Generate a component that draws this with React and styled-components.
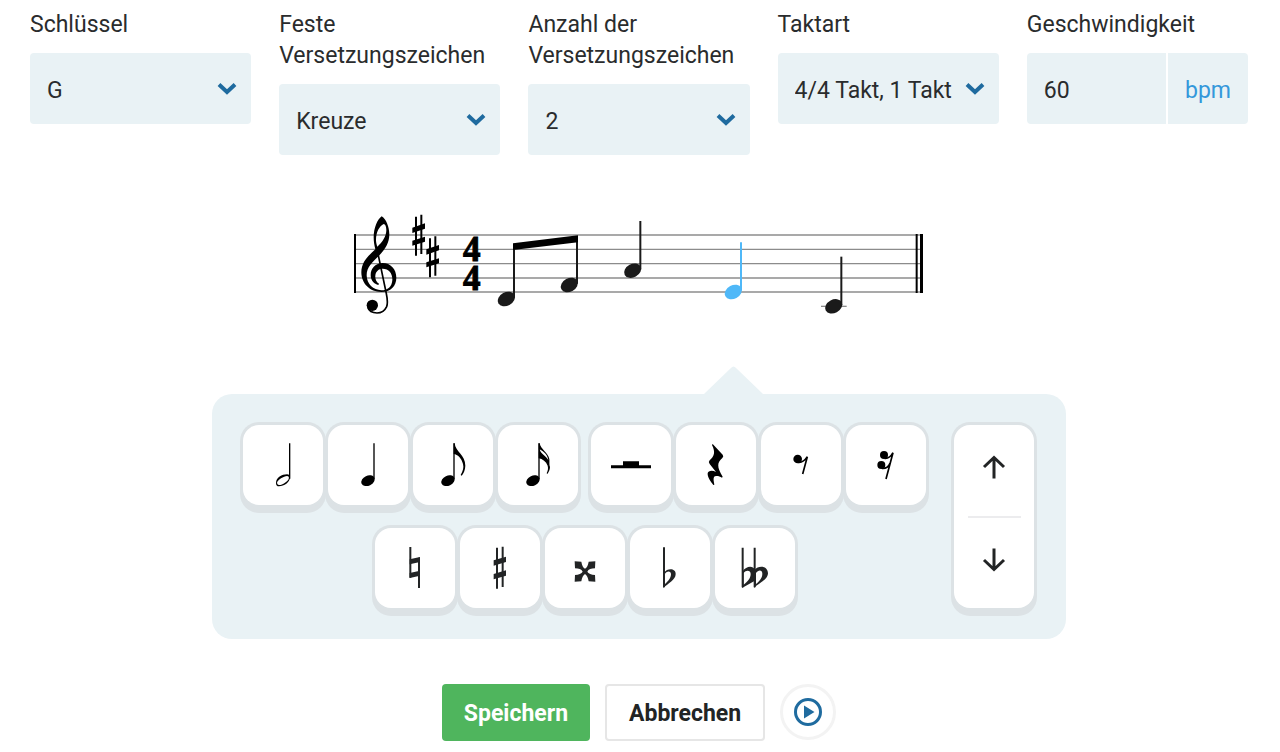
import React from "react"
import styled, { createGlobalStyle } from "styled-components"

const colors = {
  text: "#2a2c2d",
  panel: "#e9f2f5",
  keyEdge: "#dce2e5",
  chevron: "#1f6b9f",
  unit: "#3498db",
  green: "#4fb55d",
  selected: "#4fb8f8",
}

const GlobalStyle = createGlobalStyle`
  * {
    box-sizing: border-box;
  }

  body {
    margin: 0;
    background: #fff;
    color: ${colors.text};
    font-family: Roboto, "Liberation Sans", sans-serif;
    font-size: 23px;
    line-height: 31px;
  }

  button, input, select {
    font: inherit;
    color: inherit;
  }
`

const Page = styled.main`
  display: flex;
  flex-direction: column;
  align-items: center;
  padding: 9px 32px 11px 30px;
`

const Fields = styled.form`
  display: grid;
  grid-template-columns: repeat(5, minmax(0, 1fr));
  align-items: start;
  gap: 28px;
  width: 100%;
`

const Field = styled.div`
  display: flex;
  flex-direction: column;
  gap: 13px;
`

const SelectBox = styled.div`
  position: relative;

  & > svg {
    position: absolute;
    right: 14px;
    top: 29px;
    pointer-events: none;
  }
`

const Select = styled.select`
  appearance: none;
  display: block;
  width: 100%;
  height: 71px;
  padding: 3px 44px 0 17px;
  border: 0;
  border-radius: 4px;
  background: ${colors.panel};
`

const Tempo = styled.div`
  display: flex;
  gap: 2px;
  height: 71px;
  border-radius: 4px;
  overflow: hidden;
`

const TempoInput = styled.input`
  flex: 1;
  min-width: 0;
  padding: 3px 17px 0;
  border: 0;
  background: ${colors.panel};
`

const Unit = styled.span`
  display: flex;
  align-items: center;
  justify-content: center;
  width: 80px;
  padding-top: 3px;
  background: ${colors.panel};
  color: ${colors.unit};
`

const Score = styled.svg`
  display: block;
  width: 598px;
  max-width: 100%;
  margin: 45px 0 64px;
`

const Panel = styled.section`
  position: relative;
  display: flex;
  gap: 28px;
  width: 854px;
  max-width: 100%;
  padding: 31px 32px 31px 31px;
  border-radius: 20px;
  background: ${colors.panel};
`

const Pointer = styled.svg`
  position: absolute;
  left: 492px;
  bottom: 100%;
`

const Keys = styled.div`
  flex: 1;
  display: flex;
  flex-direction: column;
  gap: 23px;
`

const KeyRow = styled.div`
  display: flex;
  justify-content: center;
  gap: 13px;
`

const KeyGroup = styled.div`
  display: flex;
  gap: 5px;
`

const keySurface = `
  border-radius: 16px;
  background: #fff;
  box-shadow: 0 0 0 3px ${colors.keyEdge}, 0 5px 0 3px ${colors.keyEdge};
`

const Key = styled.button`
  width: 80px;
  height: 80px;
  padding: 0;
  border: 0;
  ${keySurface}

  & > svg {
    display: block;
  }
`

const Pitch = styled.div`
  display: flex;
  flex-direction: column;
  width: 80px;
  ${keySurface}
`

const PitchButton = styled.button`
  flex: 1;
  display: flex;
  align-items: center;
  justify-content: center;
  padding: 0 0 6px;
  border: 0;
  background: none;
`

const Divider = styled.hr`
  width: 53px;
  height: 2px;
  margin: 0 auto;
  border: 0;
  background: #ececee;
`

const Actions = styled.div`
  display: flex;
  gap: 15px;
  margin-top: 45px;
`

const Button = styled.button`
  height: 57px;
  padding: 2px 22px 0;
  border: ${p => (p.$primary ? "0" : "2px solid #e6e6e6")};
  border-radius: 4px;
  background: ${p => (p.$primary ? colors.green : "#fff")};
  color: ${p => (p.$primary ? "#fff" : "#222425")};
  font-weight: 700;
`

const PlayButton = styled.button`
  display: flex;
  align-items: center;
  justify-content: center;
  width: 56px;
  height: 56px;
  padding: 0;
  border: 3px solid #f3f3f3;
  border-radius: 50%;
  background: #fff;
`

const Chevron = () => (
  <svg width="20" height="14" viewBox="0 0 20 14" fill="none" stroke={colors.chevron} strokeWidth="4">
    <path d="M2 2.5 L10 10 L18 2.5" />
  </svg>
)

const Dropdown = ({ id, label, options }) => (
  <Field>
    <label htmlFor={id}>{label}</label>
    <SelectBox>
      <Select id={id}>
        {options.map(option => <option key={option}>{option}</option>)}
      </Select>
      <Chevron />
    </SelectBox>
  </Field>
)

// Staff drawing, three units to a pixel. Lines are 43 units apart.
const staffLines = [105, 148, 191, 234, 276]

const Note = ({ x, y, top, color = "#1a1a1a" }) => (
  <g fill={color} stroke={color}>
    <ellipse cx={x} cy={y} rx="27" ry="20" stroke="none" transform={`rotate(-28 ${x} ${y})`} />
    <path d={`M${x + 23} ${top}V${y - 4}`} strokeWidth="6" />
  </g>
)

const StaffSharp = ({ x, y }) => (
  <g transform={`translate(${x} ${y})`}>
    <path d="M-8 -55V62M8 -61V57" stroke="#000" strokeWidth="6" />
    <path d="M-19 -22L19 -35V-19L-19 -6ZM-19 17L19 5V20L-19 32Z" />
  </g>
)

const Clef = () => (
  <g>
    <path
      fillRule="evenodd"
      d="M125 49C112 58 101 85 101 112C101 124 103 136 106 148C88 165 64 184 64 217C64 251 90 276 124 276C152 276 169 258 169 233C169 208 152 189 128 189C107 189 92 205 92 225C92 242 103 252 115 255L117 251C109 246 105 237 106 227C107 214 116 206 128 206C147 206 158 221 157 240C156 260 143 271 124 271C100 270 80 252 80 226C80 200 98 186 117 167C136 148 148 128 148 103C148 82 139 57 125 49ZM131 72C118 78 108 97 108 120C108 128 110 134 112 140C128 126 139 108 139 90C139 80 136 73 131 72Z"
    />
    <path d="M110 142L138 276C142 295 145 307 140 320C134 333 124 339 111 339C99 339 87 334 83 322" fill="none" stroke="#000" strokeWidth="5" />
    <circle cx="97" cy="316" r="17" />
  </g>
)

const Staff = () => (
  <Score viewBox="0 0 1794 390" role="img" aria-label="Notenzeile">
    <g stroke="#8c8c8c" strokeWidth="4">
      {staffLines.map(y => <path key={y} d={`M44 ${y}H1746`} />)}
      <path d="M1443 319H1520" />
    </g>
    <path d="M42 102H48V279H42ZM1727 102H1733V279H1727ZM1740 102H1749V279H1740Z" />
    <Clef />
    <StaffSharp x={236} y={105} />
    <StaffSharp x={278} y={170} />
    <g fontFamily="Liberation Serif" fontWeight="700" fontSize="105" textAnchor="middle" stroke="#000" strokeWidth="3">
      <text x="395" y="183">4</text>
      <text x="395" y="269">4</text>
    </g>
    <Note x={499} y={297} top={135} />
    <Note x={688} y={255} top={115} />
    <path d="M519 130L714 106V127L519 150Z" />
    <Note x={878} y={212} top={63} />
    <Note x={1180} y={276} top={127} color={colors.selected} />
    <Note x={1481} y={319} top={170} />
  </Score>
)

const NoteHead = ({ x }) => (
  <>
    <ellipse cx={x} cy="167" rx="21" ry="15" transform={`rotate(-25 ${x} 167)`} />
    <path d={`M${x + 18} 55V162`} stroke="#000" strokeWidth="4" />
  </>
)

const durations = [
  ["Halbe Note", (
    <>
      <path fillRule="evenodd" d="M99 174C99 158 117 148 132 148C138 148 141 151 141 157C141 172 123 184 108 184C102 184 99 181 99 174ZM103 177C106 183 117 179 126 173C135 167 140 160 137 155C134 150 123 154 114 160C105 166 100 172 103 177Z" />
      <path d="M140 55V161" stroke="#000" strokeWidth="4" />
    </>
  )],
  ["Viertelnote", <NoteHead x={120} />],
  ["Achtelnote", (
    <>
      <NoteHead x={105} />
      <path d="M122 55H125C127 80 157 90 157 122C157 135 151 146 146 152L143 150C150 138 153 128 150 117C146 100 134 88 122 87Z" />
    </>
  )],
  ["Sechzehntelnote", (
    <>
      <NoteHead x={105} />
      <path d="M122 55H125C127 72 151 84 154 102C155 112 153 120 156 126C156 134 152 142 148 147L146 145C150 136 151 130 149 122C144 110 134 102 122 100V80C123 77 122 76 122 74ZM125 73C128 87 146 94 151 106C150 92 138 80 125 73Z" fillRule="evenodd" />
    </>
  )],
]

const rests = [
  ["Halbe Pause", <path d="M96 109H144V121H180V130H60V121H96Z" />],
  ["Viertelpause", (
    <path d="M110 57L140 89Q144 94 139 99C123 112 122 126 140 155L138 158C129 152 118 151 114 156C111 163 114 172 115 179L112 180C104 170 94 156 95 145C96 137 109 135 120 141L101 117Q96 111 101 106C115 93 119 82 108 60Z" />
  )],
  ["Achtelpause", (
    <>
      <circle cx="110" cy="102" r="13" />
      <path d="M112 112C122 113 132 106 139 95L125 147" fill="none" stroke="#000" strokeWidth="5" />
    </>
  )],
  ["Sechzehntelpause", (
    <>
      <circle cx="114" cy="90" r="12" />
      <circle cx="106" cy="120" r="12" />
      <path d="M116 100C126 101 135 94 141 83L120 162M108 130C119 131 127 126 132 115" fill="none" stroke="#000" strokeWidth="5" />
    </>
  )],
]

const accidentals = [
  ["Auflösungszeichen", (
    <>
      <path d="M106 57V149M132 89V180" strokeWidth="6" />
      <path d="M104 94L135 87V102L104 109ZM104 135L135 128V143L104 150Z" stroke="none" />
    </>
  )],
  ["Kreuz", (
    <>
      <path d="M111 59V182M128 56V177" strokeWidth="6" />
      <path d="M101 97L138 86V102L101 113ZM101 138L138 127V143L101 154Z" stroke="none" />
    </>
  )],
  ["Doppelkreuz", (
    <path stroke="none" d="M89 100L109 101C111 112 114 119 120 122C126 119 129 112 131 101L151 100L150 121C139 121 130 124 127 131C130 137 139 140 150 141L151 161L131 160C129 149 126 142 120 138C114 142 111 149 109 160L89 161L90 141C101 140 110 137 113 131C110 124 101 121 90 121Z" />
  )],
  ["Be", (
    <>
      <path d="M102 58V178" strokeWidth="6" />
      <path fillRule="evenodd" stroke="none" d="M102 134C112 120 137 120 137 138C137 156 114 166 100 180V134ZM105 137V168C114 160 123 150 123 139C123 129 112 128 105 137Z" />
    </>
  )],
  ["Doppel-Be", (
    <>
      <path d="M83 59V178M119 59V178" strokeWidth="6" />
      <path fillRule="evenodd" stroke="none" d="M83 130C93 114 114 112 119 125C130 112 158 112 159 136C158 157 131 164 117 180V160L81 180V130ZM86 135V170C98 161 107 151 107 138C107 126 93 125 86 135ZM123 135V168C134 159 142 149 142 137C142 125 130 124 123 135Z" />
    </>
  )],
]

const KeySet = ({ items, color = "#000" }) => (
  <KeyGroup>
    {items.map(([name, drawing]) => (
      <Key key={name} type="button" aria-label={name}>
        <svg width="80" height="80" viewBox="0 0 240 240" fill={color} stroke={color} strokeWidth="0">
          {drawing}
        </svg>
      </Key>
    ))}
  </KeyGroup>
)

const Arrow = ({ down }) => (
  <svg width="24" height="24" viewBox="0 0 24 24" fill="none" stroke="#222425" strokeWidth="3">
    <path d={down ? "M12 0.5V22M2 12L12 21.5L22 12" : "M12 23.5V2M2 12L12 2.5L22 12"} />
  </svg>
)

export default function App() {
  return (
    <>
      <GlobalStyle />
      <Page>
        <Fields>
          <Dropdown id="clef" label="Schlüssel" options={["G", "F"]} />
          <Dropdown id="signature" label="Feste Versetzungszeichen" options={["Kreuze", "Bes"]} />
          <Dropdown id="count" label="Anzahl der Versetzungszeichen" options={["2", "3", "4"]} />
          <Dropdown id="meter" label="Taktart" options={["4/4 Takt, 1 Takt", "3/4 Takt, 1 Takt"]} />
          <Field>
            <label htmlFor="tempo">Geschwindigkeit</label>
            <Tempo>
              <TempoInput id="tempo" type="text" inputMode="numeric" defaultValue="60" />
              <Unit>bpm</Unit>
            </Tempo>
          </Field>
        </Fields>
        <Staff />
        <Panel>
          <Pointer width="59" height="28" viewBox="0 0 59 28" fill={colors.panel}>
            <path d="M0 28L27 2Q29.500 -1 32 2L59 28Z" />
          </Pointer>
          <Keys>
            <KeyRow>
              <KeySet items={durations} />
              <KeySet items={rests} />
            </KeyRow>
            <KeyRow>
              <KeySet items={accidentals} color="#222425" />
            </KeyRow>
          </Keys>
          <Pitch>
            <PitchButton type="button" aria-label="Höher"><Arrow /></PitchButton>
            <Divider />
            <PitchButton type="button" aria-label="Tiefer"><Arrow down /></PitchButton>
          </Pitch>
        </Panel>
        <Actions>
          <Button type="submit" $primary>Speichern</Button>
          <Button type="button">Abbrechen</Button>
          <PlayButton type="button" aria-label="Abspielen">
            <svg width="28" height="28" viewBox="0 0 28 28" fill={colors.chevron}>
              <circle cx="14" cy="14" r="12.500" fill="none" stroke={colors.chevron} strokeWidth="3" />
              <path d="M10 7.500L20.500 14L10 20.500Z" />
            </svg>
          </PlayButton>
        </Actions>
      </Page>
    </>
  )
}
